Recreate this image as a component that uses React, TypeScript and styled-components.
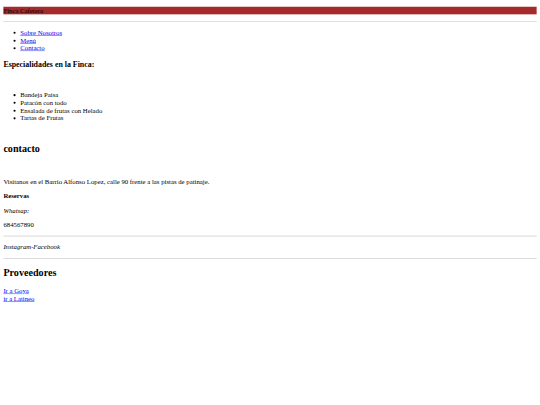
import styled, { createGlobalStyle } from 'styled-components'

const GlobalStyle = createGlobalStyle`
  html, body {
    margin: 0;
    background: #fff;
  }
`

const Frame = styled.div`
  width: 100vw;
  height: 100vh;
  overflow: hidden;
`

// the page is laid out at 1280px wide and shown at 540/1280
const Viewport = styled.div`
  display: flow-root;
  box-sizing: border-box;
  width: 1280px;
  padding: 0 8px;
  transform: scale(0.421875);
  transform-origin: 0 0;
  font-family: 'Liberation Serif', 'Times New Roman', serif;
  font-size: 16px;
  line-height: 1.15;
  color: #000;
`

const Banner = styled.p`
  margin: 16px 0;
  background-color: #a52a2a;
  color: #000;
`

const Rule = styled.hr`
  margin: 8px 0;
  height: 0;
  border: none;
  border-top: 1px solid #9a9a9a;
  border-bottom: 1px solid #eeeeee;
`

const List = styled.ul<{ $gap?: number }>`
  margin: ${p => p.$gap ?? 16}px 0 16px;
  padding-left: 40px;
  list-style: disc;
`

const NavLink = styled.a`
  color: #0000ee;
  text-decoration: underline;
`

const SectionTitle = styled.h3`
  margin: 18.72px 0;
  font-size: 18.72px;
  font-weight: bold;
`

const Heading = styled.h2<{ $gap?: number }>`
  margin: ${p => p.$gap ?? 19.92}px 0 19.92px;
  font-size: 24px;
  font-weight: bold;
`

const Paragraph = styled.p<{ $gap?: number }>`
  margin: ${p => p.$gap ?? 16}px 0 16px;
`

const Strong = styled(Paragraph)`
  font-weight: bold;
`

const Italic = styled(Paragraph)`
  font-style: italic;
`

const LinkBlock = styled.div`
  display: flex;
  flex-direction: column;
  align-items: flex-start;
`

const nav = ['Sobre Nosotros', 'Menú', 'Contacto']
const dishes = ['Bandeja Paisa', 'Patacón con todo', 'Ensalada de frutas con Helado', 'Tartas de Frutas']

export default function App() {
  return (
    <>
      <GlobalStyle />
      <Frame>
        <Viewport>
          <header>
            <Banner>Finca Cafetera</Banner>
            <Rule />
            <List>
              {nav.map(item => (
                <li key={item}>
                  <NavLink href='#'>{item}</NavLink>
                </li>
              ))}
            </List>
          </header>
          <section>
            <SectionTitle>Especialidades en la Finca:</SectionTitle>
            <List $gap={52}>
              {dishes.map(d => (
                <li key={d}>{d}</li>
              ))}
            </List>
          </section>
          <section>
            <Heading $gap={50.6}>contacto</Heading>
            <Paragraph $gap={54}>
              Visitanos en el Barrio Alfonso Lopez, calle 90 frente a las pistas de patinaje.
            </Paragraph>
            <Strong>Reservas</Strong>
            <Italic>Whatsap:</Italic>
            <Paragraph>684567890</Paragraph>
            <Rule />
            <Italic>Instagram-Facebook</Italic>
            <Rule />
          </section>
          <section>
            <Heading>Proveedores</Heading>
            <LinkBlock>
              <NavLink href='#'>Ir a Goya</NavLink>
              <NavLink href='#'>ir a Latineo</NavLink>
            </LinkBlock>
          </section>
        </Viewport>
      </Frame>
    </>
  )
}
